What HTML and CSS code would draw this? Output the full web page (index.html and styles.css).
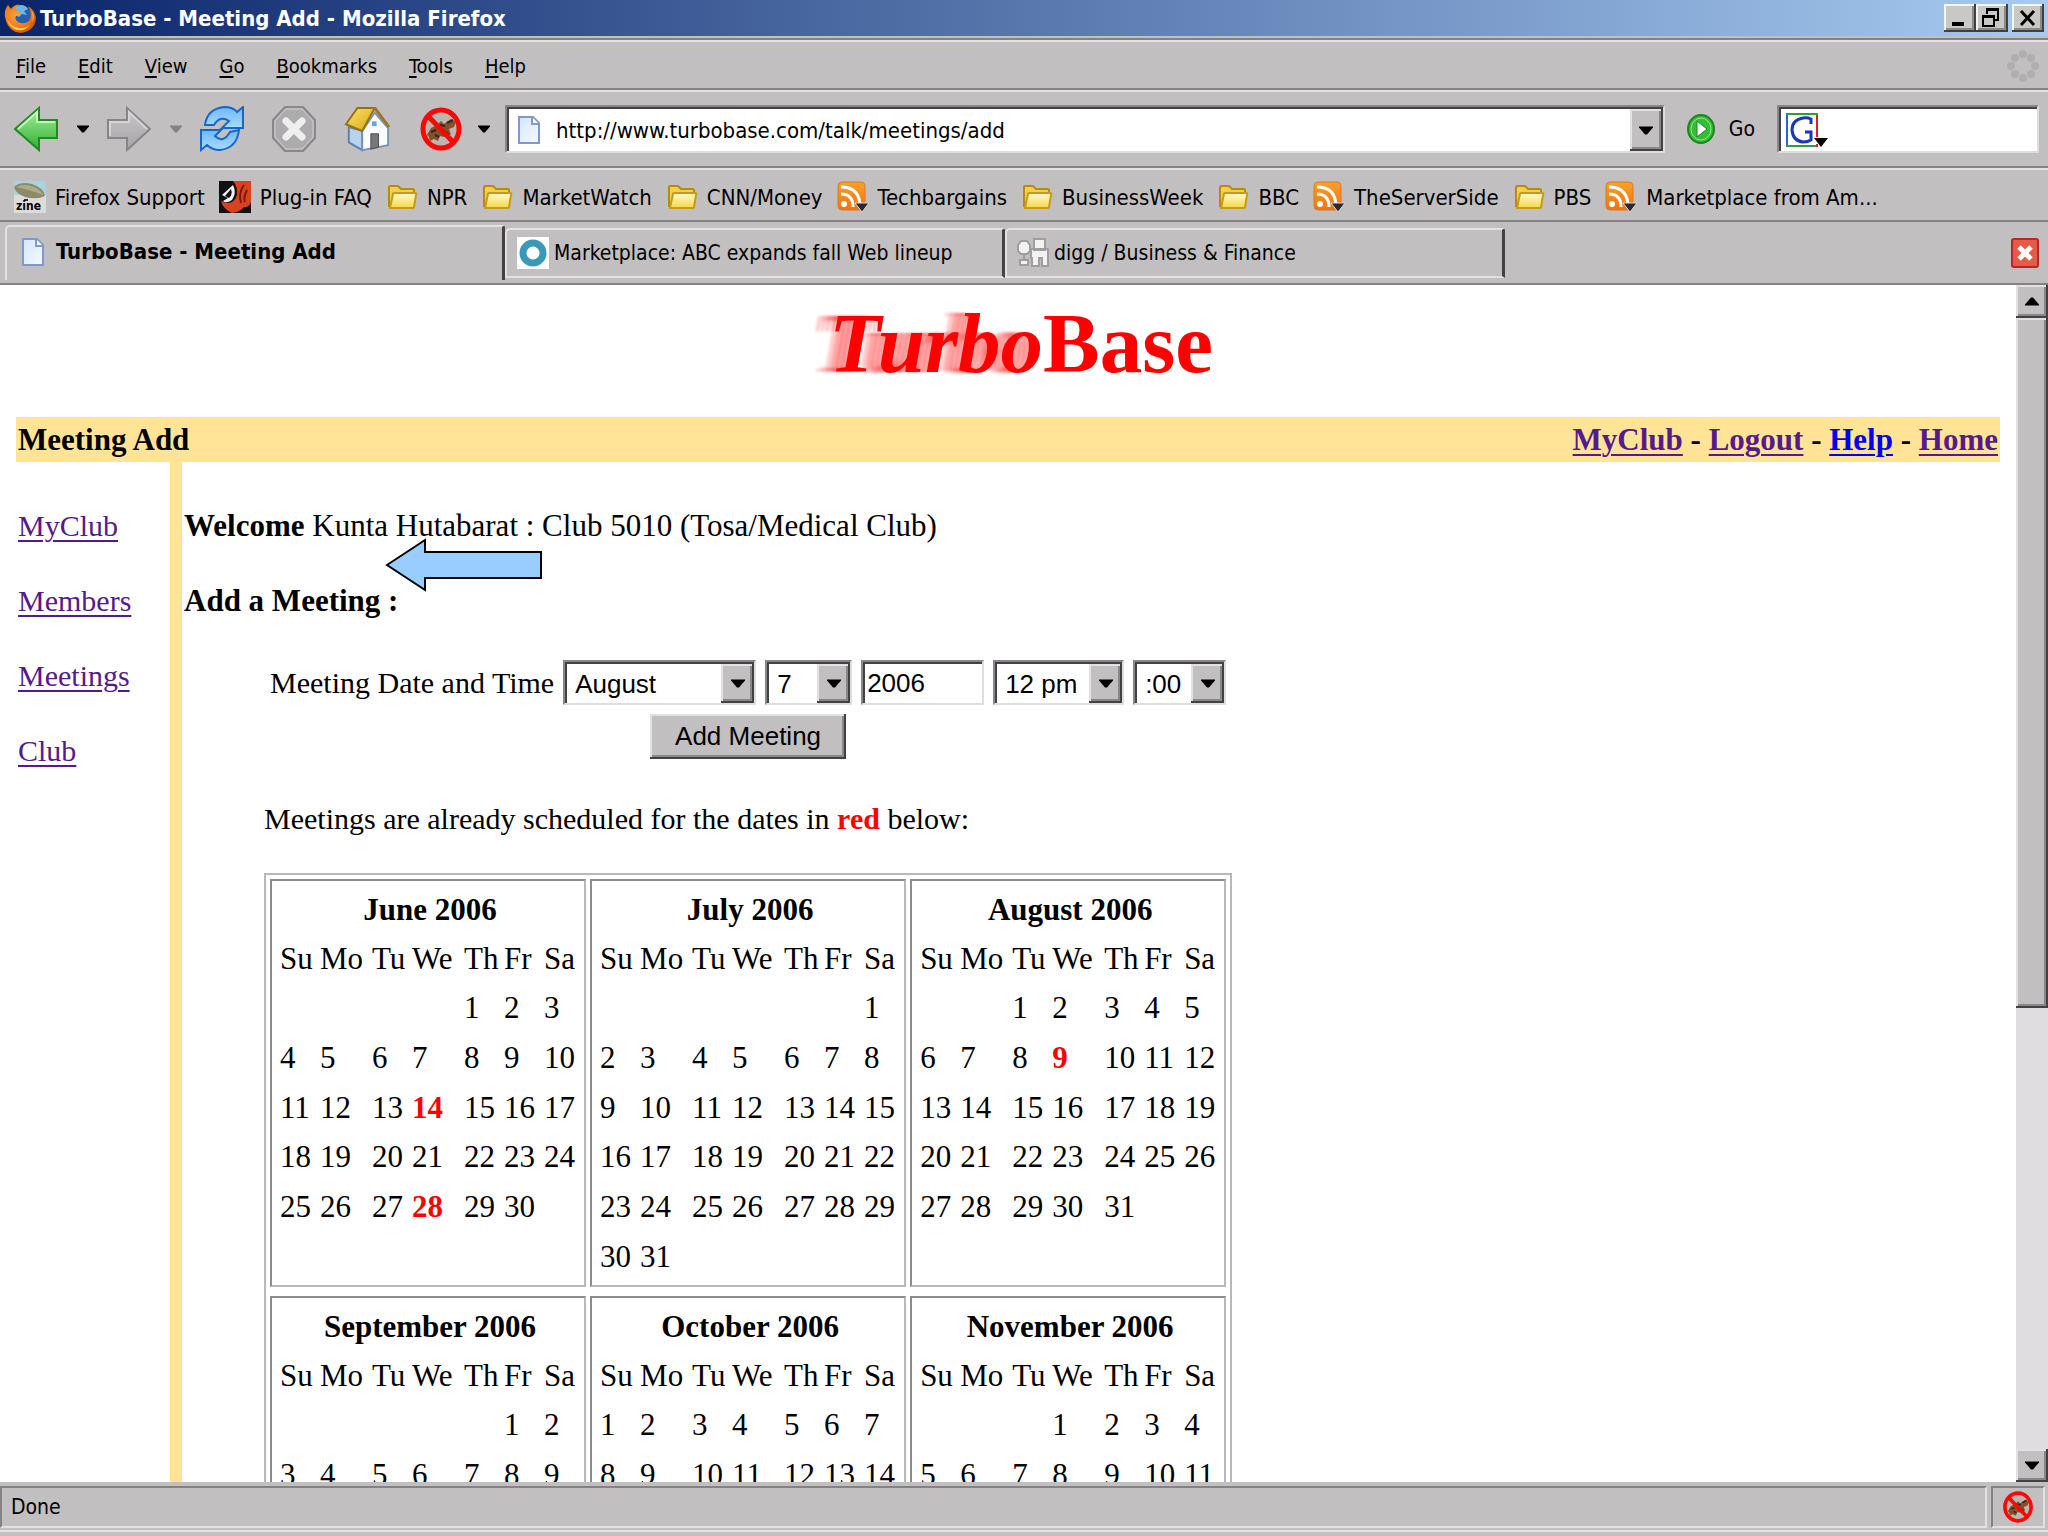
FILE: index.html
```html
<!DOCTYPE html>
<html lang="en">
<head>
  <meta charset="UTF-8">
  <title>TurboBase - Meeting Add</title>
  <link rel="stylesheet" href="styles.css">
</head>
<body>

  <!-- shared icons -->
  <svg class="defs" width="0" height="0" aria-hidden="true">
    <defs>
      <linearGradient id="gGreen" x1="0" y1="0" x2="0" y2="1"><stop offset="0" stop-color="#a6f09a"/><stop offset="1" stop-color="#2fae2f"/></linearGradient>
      <linearGradient id="gGray" x1="0" y1="0" x2="0" y2="1"><stop offset="0" stop-color="#c9c7c9"/><stop offset="1" stop-color="#a5a3a5"/></linearGradient>
      <linearGradient id="gBlue" x1="0" y1="0" x2="0" y2="1"><stop offset="0" stop-color="#6fb8f8"/><stop offset="1" stop-color="#a8dcff"/></linearGradient>
      <linearGradient id="gFolder" x1="0" y1="0" x2="0" y2="1"><stop offset="0" stop-color="#fffbd0"/><stop offset="1" stop-color="#f5d848"/></linearGradient>
      <linearGradient id="gPage" x1="0" y1="0" x2="1" y2="1"><stop offset="0" stop-color="#d4e6fb"/><stop offset="1" stop-color="#f6faff"/></linearGradient>
      <linearGradient id="gRss" x1="0" y1="0" x2="0" y2="1"><stop offset="0" stop-color="#f9a02c"/><stop offset="1" stop-color="#ee7410"/></linearGradient>
      <linearGradient id="gRoof" x1="0" y1="0" x2="1" y2="1"><stop offset="0" stop-color="#fbe36a"/><stop offset="1" stop-color="#d9a514"/></linearGradient>
      <radialGradient id="gFox" cx=".4" cy=".4" r=".7"><stop offset="0" stop-color="#f9a63a"/><stop offset=".6" stop-color="#ee7a18"/><stop offset="1" stop-color="#c44708"/></radialGradient>
    </defs>
    <symbol id="folder" viewBox="0 0 32 32">
      <path d="M3 25V6q0-1 1-1h8l3 3h12q1 0 1 1v17z" fill="#f2d04c" stroke="#b98a12" stroke-width="2"/>
      <path d="M4 27l3-14q0-1 1-1h21q2 0 1 2l-2 12q0 1-1 1z" fill="url(#gFolder)" stroke="#c69a1a" stroke-width="2"/>
    </symbol>
    <symbol id="feed" viewBox="0 0 32 32">
      <rect x="1" y="1" width="27" height="28" rx="4" fill="url(#gRss)" stroke="#e07a1a"/>
      <circle cx="7" cy="23" r="3" fill="#fff"/>
      <path d="M4 13q12 0 12 13M4 6q19 0 19 20" fill="none" stroke="#fff" stroke-width="3"/>
      <path d="M18 22h14l-7 9z" fill="#2a2a2a" stroke="#d8d5d8"/>
    </symbol>
    <symbol id="page" viewBox="0 0 24 30">
      <path d="M2 2h14l6 6v20H2z" fill="url(#gPage)" stroke="#8098d0" stroke-width="2"/>
      <path d="M15 2v7h7" fill="#fff" stroke="#8098d0" stroke-width="2"/>
    </symbol>
    <symbol id="blocked" viewBox="0 0 44 44">
      <ellipse cx="22" cy="22" rx="17" ry="18" fill="#bcb6b0"/>
      <path d="M8 28l4-7 6-3 4-4 3 3 7-5 5 3-2 5-5 2 2 6-4-2-3 4-4-1-2 5-4-2-4 2-1-4z" fill="#83512c"/>
      <path d="M12 25l5-2m4-5l5 1m1 6l3 3m-14 0l4 2M28 16l6-3" stroke="#3a2414" stroke-width="2"/>
      <ellipse cx="22" cy="22" rx="18" ry="19" fill="none" stroke="#fa0808" stroke-width="5"/>
      <path d="M9 9l26 27" stroke="#fa0808" stroke-width="5"/>
    </symbol>
    <symbol id="down" viewBox="0 0 14 8"><path d="M0 0h14v1L8 8H6L0 1z"/></symbol>
  </svg>

  <header class="titlebar">
    <svg class="icon" viewBox="0 0 32 32">
      <circle cx="16" cy="16" r="13" fill="#2a5fae"/>
      <path d="M12 4q8-3 12 3l-4 2 3 4-5-1-3 3-5-3z" fill="#6cb6ea"/>
      <path d="M1 15Q0 8 4 3l3 4q3-4 8-5-4 3-3 6l5 2q0 3-5 4-2 3 2 6 6 3 11-1 3-4 1-11l-2-4q7 4 8 12-1 13-15 15Q4 30 1 15z" fill="url(#gFox)"/>
      <path d="M3 17q2 9 11 11 8 1 12-5-5 4-12 3-8-2-11-9zM27 8q3 6 1 12 4-6-1-12z" fill="#fbd252"/>
    </svg>
    <h1 class="window-title">TurboBase - Meeting Add - Mozilla Firefox</h1>
    <div class="window-buttons">
      <button aria-label="Minimize"><svg width="32" height="28" viewBox="0 0 32 28"><path d="M8 18h12v4H8z"/></svg></button>
      <button aria-label="Restore"><svg width="32" height="28" viewBox="0 0 32 28"><path d="M11 10V5h11v11h-4M11 6h11M7 12h11v10H7zM7 13h11" fill="none" stroke="#000" stroke-width="2"/></svg></button>
      <button class="close" aria-label="Close"><svg width="32" height="28" viewBox="0 0 32 28"><path d="M9 7l13 14M22 7L9 21" stroke="#000" stroke-width="3"/></svg></button>
    </div>
  </header>

  <nav class="menubar">
    <button><u>F</u>ile</button>
    <button><u>E</u>dit</button>
    <button><u>V</u>iew</button>
    <button><u>G</u>o</button>
    <button><u>B</u>ookmarks</button>
    <button><u>T</u>ools</button>
    <button><u>H</u>elp</button>
    <svg class="throbber" viewBox="0 0 32 32" fill="#b1aeb1">
      <circle cx="16" cy="4" r="4"/><circle cx="24" cy="8" r="4"/><circle cx="28" cy="16" r="4"/><circle cx="24" cy="24" r="4"/>
      <circle cx="16" cy="28" r="4"/><circle cx="8" cy="24" r="4"/><circle cx="4" cy="16" r="4"/><circle cx="8" cy="8" r="4"/>
    </svg>
  </nav>

  <div class="toolbar">
    <button class="tool" aria-label="Back"><svg viewBox="0 0 44 46"><path d="M1 23L25 2v12h18v18H25v12z" fill="url(#gGreen)" stroke="#1d8a22" stroke-width="2"/><path d="M4 23L23 6v10h18" fill="none" stroke="#c6f7bd" stroke-width="2"/></svg></button>
    <button class="caret" aria-label="Back history"><svg><use href="#down"/></svg></button>
    <button class="tool" aria-label="Forward"><svg viewBox="0 0 44 46"><path d="M43 23L20 2v12H1v18h19v12z" fill="url(#gGray)" stroke="#888588" stroke-width="2"/><path d="M3 30V16h19V6l18 17" fill="none" stroke="#d6d4d6" stroke-width="2"/></svg></button>
    <button class="caret disabled" aria-label="Forward history"><svg><use href="#down"/></svg></button>
    <button class="tool" aria-label="Reload">
      <svg viewBox="0 0 44 46" fill="url(#gBlue)" stroke="#1668c8" stroke-width="2">
        <path d="M5 19Q7 3 24 1q9 0 13 5l6-5v21H22l7-7q-9-6-15 4z"/>
        <path d="M39 24Q37 42 20 44q-8 0-13-5l-6 5V24h20l-6 6q8 8 15-4z"/>
      </svg>
    </button>
    <button class="tool spaced" aria-label="Stop"><svg viewBox="0 0 44 46"><path d="M13 1h18l12 13v18L31 45H13L1 32V14z" fill="#aeabae" stroke="#8b888b" stroke-width="2"/><path d="M14 3h16l11 12v16L30 43H14L3 31V15z" fill="none" stroke="#cfcdcf"/><path d="M14 15l16 16M30 15L14 31" stroke="#f0eff0" stroke-width="7" stroke-linecap="round"/></svg></button>
    <button class="tool spaced home" aria-label="Home">
      <svg viewBox="0 0 47 48">
        <path d="M4 22l14 4v20L4 38z" fill="#b9d3ee" stroke="#5f7fae" stroke-width="2"/>
        <path d="M18 26L31 7l14 16v18l-27 5z" fill="#fbfcff" stroke="#7793bb" stroke-width="2"/>
        <path d="M27 45V29h8v14z" fill="#77787c" stroke="#4c4d52"/>
        <path d="M28 16h5v5h-5z" fill="#5fa6ee"/>
        <path d="M1 19L13 2h18L18 26z" fill="url(#gRoof)" stroke="#98720e" stroke-width="2"/>
        <path d="M31 2l15 20" stroke="#9a762a" stroke-width="3"/>
      </svg>
    </button>
    <button class="tool spaced" aria-label="Image blocking"><svg><use href="#blocked"/></svg></button>
    <button class="caret small" aria-label="Blocking options"><svg><use href="#down"/></svg></button>

    <div class="field urlbar">
      <svg class="page-icon"><use href="#page"/></svg>
      <input type="text" id="url" aria-label="Address" value="http://www.turbobase.com/talk/meetings/add">
      <button class="drop" aria-label="Show history"><svg><use href="#down"/></svg></button>
    </div>

    <button class="go">
      <svg viewBox="0 0 28 30"><ellipse cx="14" cy="15" rx="13" ry="14" fill="#35bd35" stroke="#1b861f" stroke-width="2"/><ellipse cx="14" cy="15" rx="10" ry="11" fill="none" stroke="#8fe88a"/><path d="M10 7v16l10-8z" fill="#fff" stroke="#178a1c"/></svg>
      Go
    </button>

    <div class="field search">
      <svg class="engine" viewBox="0 0 42 34">
        <path d="M1 0v34" stroke="#2a62e0" stroke-width="2"/><path d="M0 1h32M0 33h32" stroke="#28a03c" stroke-width="2"/><path d="M31 2v22M31 31v3" stroke="#e02020" stroke-width="2"/>
        <path d="M25 11V6q-4-2-8-1-11 2-11 12 1 11 11 12 5 0 8-2v-8h-6m6-8V5" fill="none" stroke="#1838b8" stroke-width="3"/>
        <path d="M28 25h14l-7 9z"/>
      </svg>
      <input type="text" id="search" aria-label="Search">
    </div>
  </div>

  <nav class="bookmarks">
    <a href="#">
      <svg class="icon" viewBox="0 0 32 32"><path d="M0 0h32v18H0z" fill="#a9d3df"/><path d="M0 14h32v18H0z" fill="#dcdcdc"/><path d="M0 6q6-6 18-3 12 4 13 12-8 4-20 1Q1 12 0 6z" fill="#8c8a68"/><path d="M2 6q8-4 18 0 7 3 9 8-12-5-27-8z" fill="#aeab88"/><path d="M10 18h4v2h-4z" fill="#333"/><text x="2" y="29" class="zine">zine</text></svg>
      Firefox Support</a>
    <a href="#">
      <svg class="icon" viewBox="0 0 32 32"><path d="M0 0h32v32H0z" fill="#111"/><path d="M14 0h18v21q-2 6-7 5-4 5-12 6Q4 28 2 20q12 6 16-6 1-8-4-14z" fill="#d8421c"/><path d="M3 14L14 4q4 8-1 15-6 4-9 1l5-3z" fill="#f2f2f2"/><path d="M6 15l6-7q2 6-2 9z" fill="#111"/><path d="M25 4q-6 8-3 18M28 9q-4 8-2 12" fill="none" stroke="#7c1606" stroke-width="2"/></svg>
      Plug-in FAQ</a>
    <a href="#"><svg class="icon"><use href="#folder"/></svg>NPR</a>
    <a href="#"><svg class="icon"><use href="#folder"/></svg>MarketWatch</a>
    <a href="#"><svg class="icon"><use href="#folder"/></svg>CNN/Money</a>
    <a href="#"><svg class="icon"><use href="#feed"/></svg>Techbargains</a>
    <a href="#"><svg class="icon"><use href="#folder"/></svg>BusinessWeek</a>
    <a href="#"><svg class="icon"><use href="#folder"/></svg>BBC</a>
    <a href="#"><svg class="icon"><use href="#feed"/></svg>TheServerSide</a>
    <a href="#"><svg class="icon"><use href="#folder"/></svg>PBS</a>
    <a href="#"><svg class="icon"><use href="#feed"/></svg>Marketplace from Am...</a>
  </nav>

  <div class="tabs">
    <button class="tab active"><svg class="page-icon"><use href="#page"/></svg>TurboBase - Meeting Add</button>
    <button class="tab"><svg class="icon" viewBox="0 0 32 32"><path d="M0 0h32v32H0z" fill="#fff"/><circle cx="16" cy="16" r="10" fill="none" stroke="#389ab8" stroke-width="7"/></svg>Marketplace: ABC expands fall Web lineup</button>
    <button class="tab"><svg class="icon" viewBox="0 0 32 32" fill="#f2f2f2" stroke="#a09da0" stroke-width="2"><path d="M4 4h6l3 4v6l-3 3H4l-3-3V8zM7 17v7M3 23h8v5H3zM14 12h17v17h-6v-8h-3v8h-7v-8h-1zM17 2h11v11H17z"/></svg>digg / Business &amp; Finance</button>
    <button class="close-tab" aria-label="Close tab"><svg viewBox="0 0 30 32"><rect x="2" y="2" width="26" height="28" rx="2" fill="#e85a48" stroke="#b8281e" stroke-width="2"/><path d="M9 10l12 12M21 10L9 22" stroke="#fff" stroke-width="5"/></svg></button>
  </div>

  <div class="viewport">
    <main class="page">
      <h2 class="logo"><em>Turbo</em>Base</h2>

      <div class="page-header">
        <strong>Meeting Add</strong>
        <strong><a href="#">MyClub</a> - <a href="#">Logout</a> - <a href="#" class="unvisited">Help</a> - <a href="#">Home</a></strong>
      </div>

      <div class="columns">
        <nav class="sidebar">
          <a href="#">MyClub</a>
          <a href="#">Members</a>
          <a href="#">Meetings</a>
          <a href="#">Club</a>
        </nav>

        <section class="content">
          <p><b>Welcome</b> Kunta Hutabarat : Club 5010 (Tosa/Medical Club)</p>
          <svg class="pointer" viewBox="0 0 158 54"><path d="M2 27L40 2v12h116v26H40v12z" fill="#99ccff" stroke="#000" stroke-width="2"/></svg>
          <p class="subtitle"><b>Add a Meeting :</b></p>

          <form>
            <div class="row">
              <label for="month">Meeting Date and Time</label>
              <span class="field month"><select id="month"><option>August</option></select><span class="drop"><svg><use href="#down"/></svg></span></span>
              <span class="field day"><select aria-label="Day"><option>7</option></select><span class="drop"><svg><use href="#down"/></svg></span></span>
              <span class="field year"><input type="text" aria-label="Year" value="2006"></span>
              <span class="field hour"><select aria-label="Hour"><option>12 pm</option></select><span class="drop"><svg><use href="#down"/></svg></span></span>
              <span class="field minute"><select aria-label="Minutes"><option>:00</option></select><span class="drop"><svg><use href="#down"/></svg></span></span>
            </div>
            <button type="button" class="submit">Add Meeting</button>
          </form>

          <p class="note">Meetings are already scheduled for the dates in <b class="red">red</b> below:</p>

          <div class="calendars" id="calendars"></div>
        </section>
      </div>
    </main>

    <div class="scrollbar">
      <button aria-label="Scroll up"><svg class="up"><use href="#down"/></svg></button>
      <div class="track"><div class="thumb"></div></div>
      <button aria-label="Scroll down"><svg><use href="#down"/></svg></button>
    </div>
  </div>

  <footer class="statusbar">
    <span class="panel message">Done</span>
    <span class="panel"><svg class="icon"><use href="#blocked"/></svg></span>
  </footer>

  <script>
    const DAYS = ["Su", "Mo", "Tu", "We", "Th", "Fr", "Sa"];

    // first = weekday of the 1st, 0 is Sunday
    const months = [
      { name: "June 2006", first: 4, days: 30, booked: [14, 28] },
      { name: "July 2006", first: 6, days: 31, booked: [] },
      { name: "August 2006", first: 2, days: 31, booked: [9] },
      { name: "September 2006", first: 5, days: 30, booked: [] },
      { name: "October 2006", first: 0, days: 31, booked: [] },
      { name: "November 2006", first: 3, days: 30, booked: [] }
    ];

    function renderMonth(month) {
      let rows = "";
      for (let week = 0; week < 6; week++) {
        rows += "<tr>";
        for (let i = 0; i < 7; i++) {
          const day = week * 7 + i - month.first + 1;
          if (day < 1 || day > month.days) {
            rows += "<td></td>";
          } else if (month.booked.includes(day)) {
            rows += `<td><b class="red">${day}</b></td>`;
          } else {
            rows += `<td>${day}</td>`;
          }
        }
        rows += "</tr>";
      }
      return `
        <div class="month-cell">
          <table>
            <colgroup><col><col class="wide"><col><col class="wide"><col><col><col></colgroup>
            <thead>
              <tr><th colspan="7">${month.name}</th></tr>
              <tr>${DAYS.map(d => `<td>${d}</td>`).join("")}</tr>
            </thead>
            <tbody>${rows}</tbody>
          </table>
        </div>`;
    }

    document.getElementById("calendars").innerHTML = months.map(renderMonth).join("");
  </script>

</body>
</html>
```
FILE: styles.css
```css
* {
  box-sizing: border-box;
}

body {
  margin: 0;
  height: 100vh;
  display: flex;
  flex-direction: column;
  overflow: hidden;
  background-color: #c2bfc1;
  color: #000;
  font-family: "DejaVu Sans Condensed", "DejaVu Sans", sans-serif;
  font-size: 21px;
}

button, input, select {
  font: inherit;
  color: inherit;
  margin: 0;
  padding: 0;
  border: none;
  background: none;
}

p, h1, h2 {
  margin: 0;
}

svg {
  display: block;
  flex: none;
}

.defs {
  position: absolute;
}

.icon {
  width: 32px;
  height: 32px;
}

.page-icon {
  width: 24px;
  height: 30px;
}

/* title bar */

.titlebar {
  flex: none;
  display: flex;
  align-items: center;
  height: 36px;
  padding: 0 4px;
  background: linear-gradient(to right, #0a246a, #a6caf0);
}

.window-title {
  flex: 1;
  padding-left: 4px;
  color: #fff;
  font-size: 22px;
}

.window-buttons {
  display: flex;
}

.window-buttons button {
  height: 28px;
  background-color: #c8c8c4;
  box-shadow: inset -2px -2px #404040, inset 2px 2px #f4f4f4, inset -4px -4px #8a8a8a;
}

.window-buttons .close {
  margin-left: 4px;
}

/* menu */

.menubar, .toolbar, .bookmarks {
  flex: none;
  display: flex;
  align-items: center;
  border-top: 2px solid #e2e0e2;
  border-bottom: 2px solid #858285;
}

.menubar {
  height: 50px;
  margin-top: 4px;
  padding: 2px 9px 0 0;
  box-shadow: 0 -2px #858285;
  font-size: 20px;
}

.menubar button {
  padding: 0 16px;
}

.menubar u {
  text-underline-offset: 3px;
}

.throbber {
  width: 32px;
  height: 32px;
  margin-left: auto;
}

/* toolbar */

.toolbar {
  height: 78px;
  padding: 0 9px 0 14px;
}

.tool svg {
  width: 44px;
  height: 46px;
}

.tool.home svg {
  width: 47px;
}

.spaced {
  margin-left: 28px;
}

.caret {
  display: flex;
  justify-content: center;
  width: 49px;
}

.caret.small {
  width: 42px;
}

.caret svg {
  width: 12px;
  height: 8px;
}

.caret.disabled {
  color: #858285;
  fill: #858285;
}

.field {
  display: flex;
  align-items: center;
  background-color: #fff;
  border: 2px solid;
  border-color: #8a878a #dedcde #dedcde #8a878a;
  box-shadow: inset 2px 2px #444144;
  padding: 2px 0 0 2px;
}

.field input, .field select {
  flex: 1;
  min-width: 0;
  outline: none;
  appearance: none;
}

.drop {
  align-self: stretch;
  display: flex;
  align-items: center;
  justify-content: center;
  width: 33px;
  background-color: #c2bfc1;
  box-shadow: inset -2px -2px #444144, inset 2px 2px #e2e0e2, inset -4px -4px #8a878a;
}

.drop svg {
  width: 14px;
  height: 9px;
}

.urlbar {
  flex: 1;
  height: 48px;
  font-size: 22px;
}

.urlbar .page-icon {
  margin: 0 15px 0 8px;
}

.go {
  display: flex;
  align-items: center;
  gap: 14px;
  padding: 0 22px;
}

.go svg {
  width: 28px;
  height: 30px;
}

.search {
  width: 262px;
  height: 48px;
}

.engine {
  width: 42px;
  height: 34px;
  margin-left: 5px;
}

/* bookmarks */

.bookmarks {
  height: 54px;
  padding: 4px 14px 0;
  gap: 14px;
  font-size: 22px;
}

.bookmarks a {
  display: flex;
  align-items: center;
  gap: 9px;
  color: #000;
  text-decoration: none;
  white-space: nowrap;
}

.zine {
  font: bold 12px "DejaVu Sans Condensed", sans-serif;
}

/* tabs */

.tabs {
  flex: none;
  display: flex;
  height: 63px;
  padding: 3px 8px 3px 5px;
  border-bottom: 2px solid #858285;
}

.tab {
  display: flex;
  align-items: center;
  gap: 5px;
  flex: 0 1 500px;
  margin: 3px 0 2px;
  padding: 0 10px;
  border: 2px solid #e2e0e2;
  border-right: 3px solid #444144;
  border-radius: 5px 3px 0 0;
  white-space: nowrap;
}

.tab.active {
  gap: 11px;
  margin: 0;
  padding: 0 14px 4px;
  border-bottom: none;
  font-size: 22px;
  font-weight: bold;
}

.close-tab {
  margin-left: auto;
}

.close-tab svg {
  width: 30px;
  height: 32px;
}

/* page */

.viewport {
  flex: 1;
  min-height: 0;
  display: flex;
  background-color: #fff;
}

.page {
  flex: 1;
  overflow: hidden;
  padding: 0 16px;
  font-family: "Liberation Serif", serif;
  font-size: 31px;
  line-height: 37px;
}

.logo {
  padding: 12px 0 28px 26px;
  color: #f00;
  font-size: 85px;
  line-height: 92px;
  text-align: center;
}

.logo em {
  text-shadow:
    -5px 0 2px rgba(255, 0, 0, 0.2),
    -10px 0 2px rgba(255, 0, 0, 0.2),
    -15px 0 3px rgba(255, 0, 0, 0.2),
    -20px 0 3px rgba(255, 0, 0, 0.2);
}

.page-header {
  display: flex;
  justify-content: space-between;
  padding: 4px 2px;
  background-color: #ffe498;
}

.page a {
  color: #551a8b;
  text-decoration-thickness: 2px;
  text-underline-offset: 4px;
}

.page a.unvisited {
  color: #00e;
}

.columns {
  display: flex;
}

.sidebar {
  display: flex;
  flex-direction: column;
  align-items: flex-start;
  gap: 38px;
  width: 154px;
  padding: 45px 2px 0;
  font-size: 30px;
}

.content {
  flex: 1;
  position: relative;
  padding: 45px 2px 0;
  border-left: 12px solid #ffe498;
}

/* arrow drawn over the text */
.pointer {
  position: absolute;
  left: 203px;
  top: 76px;
  width: 158px;
  height: 54px;
}

.subtitle {
  margin-top: 38px;
}

form {
  display: inline-block;
  margin: 41px 0 0 86px;
}

.row {
  display: flex;
  align-items: center;
  gap: 9px;
  font-size: 30px;
}

form .field, .submit {
  height: 45px;
  font: 26px "Liberation Sans", sans-serif;
}

.field select {
  padding-left: 8px;
}

.year input {
  padding-left: 2px;
}

.month {
  width: 193px;
}

.day {
  width: 87px;
}

.year {
  width: 123px;
}

.hour {
  width: 131px;
}

.minute {
  width: 93px;
}

.submit {
  display: block;
  width: 196px;
  margin: 9px auto 0;
  background-color: #c2bfc1;
  box-shadow: inset -2px -2px #444144, inset 2px 2px #e2e0e2, inset -4px -4px #8a878a;
}

.note {
  margin: 41px 0 36px 80px;
  font-size: 30px;
}

.red {
  color: #f00;
}

.calendars {
  display: inline-grid;
  grid-template-columns: repeat(3, auto);
  gap: 9px 4px;
  margin-left: 80px;
  padding: 4px;
  border: 2px solid #b8b8b8;
}

.month-cell {
  padding: 4px 4px 4px 8px;
  border: 2px solid;
  border-color: #8c8c8c #b8b8b8 #b8b8b8 #8c8c8c;
}

.month-cell table {
  width: 300px;
  height: 396px;
  table-layout: fixed;
  border-collapse: collapse;
}

.month-cell tr {
  height: 49px;
}

.month-cell col {
  width: 40px;
}

.month-cell col.wide {
  width: 52px;
}

.month-cell col:last-child {
  width: 36px;
}

.month-cell th, .month-cell td {
  padding: 0;
  text-align: left;
  white-space: nowrap;
}

.month-cell th {
  text-align: center;
}

/* scrollbar */

.scrollbar {
  display: flex;
  flex-direction: column;
  width: 32px;
  background-color: #dfdde0;
}

.scrollbar button, .thumb {
  background-color: #c2bfc1;
  box-shadow: inset -2px -2px #444144, inset 2px 2px #e2e0e2, inset -4px -4px #8a878a;
}

.scrollbar button {
  display: flex;
  align-items: center;
  justify-content: center;
  height: 33px;
}

.scrollbar svg {
  width: 14px;
  height: 9px;
}

.scrollbar .up {
  transform: rotate(180deg);
}

.track {
  flex: 1;
}

.thumb {
  height: 61%;
}

/* status bar */

.statusbar {
  flex: none;
  display: flex;
  gap: 4px;
  height: 54px;
  padding: 4px 3px 4px 0;
  border-bottom: 4px solid #c2bfc1;
  box-shadow: inset 0 -2px #e2e0e2;
}

.panel {
  display: flex;
  align-items: center;
  padding: 0 9px;
  border: 2px solid;
  border-color: #858285 #e2e0e2 #e2e0e2 #858285;
}

.message {
  flex: 1;
}
```
